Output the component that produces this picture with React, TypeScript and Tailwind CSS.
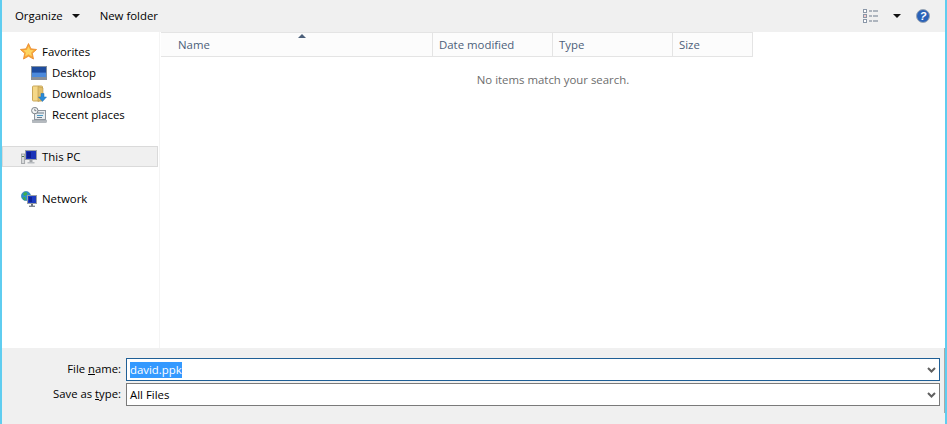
import React from "react";

const font = "font-['Open_Sans','Noto_Sans',sans-serif]";

function StarIcon() {
  return (
    <svg width="17" height="17" viewBox="0 0 16 16" className="shrink-0 -ml-px">
      <path
        d="M8 .5l2.300 5 5.300.6-4 3.600 1.100 5.400L8 12.400l-4.700 2.700 1.100-5.400-4-3.600 5.300-.6z"
        fill="#f9a93a"
        stroke="#ea8a2c"
        strokeWidth="0.8"
      />
      <path d="M8 3.200l1.600 3.300 3.300.4-2.500 2.300.7 3.300L8 10.700l-3.100 1.800.7-3.300-2.500-2.300 3.300-.4z" fill="#fdd563" />
    </svg>
  );
}

function DesktopIcon() {
  return (
    <svg width="16" height="14" viewBox="0 0 16 14" className="shrink-0">
      <rect x="0.500" y="0.500" width="15" height="11" fill="#2f62b8" stroke="#83909f" />
      <rect x="1" y="1" width="14" height="5" fill="#1d4c9e" />
      <rect x="1" y="7" width="14" height="4" fill="#4c8adc" />
      <rect x="0" y="11.500" width="16" height="2.500" fill="#8b8f96" />
    </svg>
  );
}

function DownloadsIcon() {
  return (
    <svg width="16" height="18" viewBox="0 0 16 18" className="shrink-0">
      <rect x="1.500" y="1" width="10" height="15" rx="1" fill="#f5d888" stroke="#c9a75a" />
      <path d="M7 1.500l5 1.500v11l-5 2.500z" fill="#e2c06c" stroke="#b8964c" strokeWidth="0.6" />
      <path d="M10 8.500h3v3.500h2.500l-4 4.500-4-4.500H10z" fill="#2a8ad8" stroke="#1e6cb0" strokeWidth="0.5" />
    </svg>
  );
}

function RecentIcon() {
  return (
    <svg width="16" height="16" viewBox="0 0 16 16" className="shrink-0">
      <rect x="3.500" y="3.500" width="11" height="9" fill="#e8ecef" stroke="#8e969e" />
      <rect x="6" y="5.500" width="7" height="1" fill="#6d7c8c" />
      <rect x="6" y="8" width="6" height="1" fill="#4a9cc8" />
      <rect x="6" y="10" width="5" height="1" fill="#6d7c8c" />
      <rect x="1.500" y="13" width="14" height="2.500" fill="#b5babf" stroke="#8e969e" strokeWidth="0.5" />
      <circle cx="3.800" cy="3.600" r="3.200" fill="#f2f4f5" stroke="#7b8288" />
      <path d="M3.800 1.700v2h1.600" fill="none" stroke="#50565c" strokeWidth="0.7" />
    </svg>
  );
}

function PcIcon() {
  return (
    <svg width="16" height="14" viewBox="0 0 16 14" className="shrink-0">
      <rect x="0.300" y="4" width="3.400" height="9.500" fill="#d8dadb" stroke="#8c9094" strokeWidth="0.7" />
      <rect x="1" y="6" width="2" height="1" fill="#4c7a4c" />
      <rect x="4.500" y="0.500" width="11" height="9" fill="#1a34b8" stroke="#9aa0a6" />
      <rect x="6" y="2" width="4" height="6" fill="#0c1c90" />
      <rect x="8.500" y="10" width="3" height="2" fill="#a0a4a8" />
      <rect x="6.500" y="12" width="7" height="1.500" fill="#b8bcc0" />
    </svg>
  );
}

function NetworkIcon() {
  return (
    <svg width="16" height="16" viewBox="0 0 16 16" className="shrink-0">
      <circle cx="5" cy="5" r="4.600" fill="#2a8ed0" stroke="#1c6a9c" strokeWidth="0.5" />
      <path d="M2 3l2-2 2.500 1-1 2-2 1zM1.500 6.500L4 6l1 2.500-1.500 1z" fill="#3fae4a" />
      <rect x="6.500" y="4.500" width="9" height="8" fill="#1c3cc0" stroke="#9aa0a6" />
      <rect x="8" y="6" width="3" height="5" fill="#0e2298" />
      <rect x="10" y="13" width="2" height="2" fill="#6a7078" />
      <rect x="8" y="14.600" width="6" height="1.400" fill="#7d868f" />
    </svg>
  );
}

function ViewsIcon() {
  return (
    <svg width="16" height="14" viewBox="0 0 16 14" className="shrink-0">
      <rect x="0.500" y="0.500" width="3" height="3" fill="#fff" stroke="#8a97a8" />
      <rect x="0.500" y="5.500" width="3" height="3" fill="#fff" stroke="#8a97a8" />
      <rect x="1.500" y="6.500" width="1" height="1" fill="#d03030" />
      <rect x="0.500" y="10.500" width="3" height="3" fill="#fff" stroke="#8a97a8" />
      <path d="M6 2h3M10 2h5M6 7h3M10 7h5M6 12h3M10 12h5" stroke="#6d7a8c" strokeWidth="1" />
    </svg>
  );
}

function HelpIcon() {
  return (
    <div className="w-[14px] h-[14px] rounded-full bg-[#2a62b8] border border-[#9aa6b4] flex items-center justify-center text-[11px] leading-none font-bold italic text-white font-['Liberation_Sans',sans-serif]">
      ?
    </div>
  );
}

function Chevron() {
  return (
    <svg width="9" height="6" viewBox="0 0 9 6">
      <path d="M1 1l3.500 3.500L8 1" fill="none" stroke="#606060" strokeWidth="2" />
    </svg>
  );
}

function NavItem({
  icon,
  label,
  indent,
  selected,
}: {
  icon: React.ReactNode;
  label: string;
  indent?: boolean;
  selected?: boolean;
}) {
  return (
    <div
      className={`h-[21px] flex items-center border ${
        selected ? "bg-[#f0f0f0] border-[#dadada]" : "border-transparent"
      } ${indent ? "pl-[28px]" : "pl-[18px]"}`}
    >
      <div className="w-[16px] h-[17px] flex items-center justify-center shrink-0">{icon}</div>
      <span className="ml-[5px] text-[11.4px] text-black">{label}</span>
    </div>
  );
}

function HeaderCell({ label, width }: { label: string; width: string }) {
  return (
    <div className={`${width} shrink-0 h-full border-r border-[#e4e4e4] pl-[6px] pt-[1px] flex items-center text-[11.4px] text-[#4c607a]`}>
      {label}
    </div>
  );
}

function FieldRow({
  label,
  children,
  border,
}: {
  label: React.ReactNode;
  children?: React.ReactNode;
  border: string;
}) {
  return (
    <div className="flex items-center">
      <div className="w-[119px] text-right text-[11.3px] text-black shrink-0">{label}</div>
      <div className={`ml-[5px] flex-1 h-[23px] bg-white border ${border} flex items-center justify-between pl-[3px] pr-[3px] text-[11.4px] text-black`}>
        {children}
        <Chevron />
      </div>
    </div>
  );
}

export default function App() {
  return (
    <div className={`${font} w-[947px] h-[424px] bg-white flex flex-col border-l-2 border-r-2 border-[#5fcdf0] overflow-hidden`}>
      {/* Toolbar */}
      <div className="h-[32px] shrink-0 bg-[#f0f0f0] flex items-center text-[11.4px] text-black pl-[13px] pr-[15px]">
        <span>Organize</span>
        <div className="ml-[9px] w-0 h-0 border-l-[4px] border-r-[4px] border-t-[4px] border-l-transparent border-r-transparent border-t-[#101010]" />
        <span className="ml-[20px]">New folder</span>
        <div className="ml-auto flex items-center">
          <ViewsIcon />
          <div className="ml-[14px] w-0 h-0 border-l-[4px] border-r-[4px] border-t-[4px] border-l-transparent border-r-transparent border-t-[#101010]" />
          <div className="ml-[15px]">
            <HelpIcon />
          </div>
        </div>
      </div>

      {/* Nav pane + file list */}
      <div className="flex-1 flex min-h-0">
        <div className="w-[158px] shrink-0 border-r border-[#f4f4f4] pt-[9px]">
          <NavItem icon={<StarIcon />} label="Favorites" />
          <NavItem icon={<DesktopIcon />} label="Desktop" indent />
          <NavItem icon={<DownloadsIcon />} label="Downloads" indent />
          <NavItem icon={<RecentIcon />} label="Recent places" indent />
          <div className="h-[21px]" />
          <div className="pr-[1px]">
            <NavItem icon={<PcIcon />} label="This PC" selected />
          </div>
          <div className="h-[21px]" />
          <NavItem icon={<NetworkIcon />} label="Network" />
        </div>
        <div className="flex-1 pl-[1px]">
          <div className="relative w-[592px] h-[25px] bg-[#fcfcfc] border-t border-b border-[#e4e4e4] flex">
            <div className="absolute left-[137px] top-[1px] w-0 h-0 border-l-[4px] border-r-[4px] border-b-[4px] border-l-transparent border-r-transparent border-b-[#4c607a]" />
            <div className="w-[272px] shrink-0 h-full border-r border-[#e4e4e4] pl-[17px] pt-[1px] flex items-center text-[11.4px] text-[#4c607a]">
              Name
            </div>
            <HeaderCell label="Date modified" width="w-[120px]" />
            <HeaderCell label="Type" width="w-[120px]" />
            <HeaderCell label="Size" width="w-[80px]" />
          </div>
          <div className="text-center text-[11.4px] text-[#6d6d6d] mt-[14px]">
            No items match your search.
          </div>
        </div>
      </div>

      {/* Bottom fields */}
      <div className="relative h-[76px] shrink-0 bg-[#f0f0f0] pt-[10px] pr-[5px] flex flex-col gap-[2px]">
        <div className="absolute right-0 top-0 w-[1px] h-[65px] bg-[#a8a8a8]" />
        <FieldRow
          border="border-[#1f5f96]"
          label={
            <>
              File <span className="underline">n</span>ame:
            </>
          }
        >
          <span className="bg-[#3399ff] text-white leading-[16px]">david.ppk</span>
        </FieldRow>
        <FieldRow
          border="border-[#7a7a7a]"
          label={
            <>
              Save as <span className="underline">t</span>ype:
            </>
          }
        >
          <span>All Files</span>
        </FieldRow>
      </div>
    </div>
  );
}
